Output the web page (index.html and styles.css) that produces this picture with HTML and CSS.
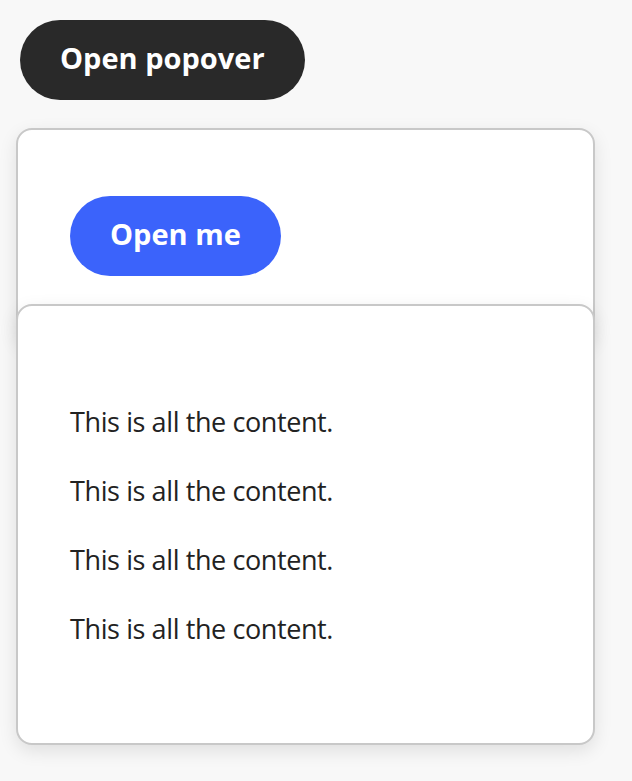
FILE: index.html
```html
<!DOCTYPE html>
<html lang="en">
<head>
<meta charset="utf-8">
<title>Popover</title>
<link rel="stylesheet" href="styles.css">
</head>
<body>
  <main class="page">
    <button class="btn btn-dark" type="button">Open popover</button>

    <div class="popover popover-outer">
      <button class="btn btn-accent" type="button">Open me</button>
    </div>

    <div class="popover popover-inner">
      <p class="content">This is all the content.</p>
      <p class="content">This is all the content.</p>
      <p class="content">This is all the content.</p>
      <p class="content">This is all the content.</p>
    </div>
  </main>
</body>
</html>
```

FILE: styles.css
```css
html, body {
  margin: 0;
  padding: 0;
  background: #f8f8f8;
}

body {
  font-family: "Open Sans", "Noto Sans", sans-serif;
  color: #222222;
}

.page {
  position: relative;
  padding: 20px;
  min-height: 781px;
  box-sizing: border-box;
}

.btn {
  display: inline-flex;
  align-items: center;
  justify-content: center;
  box-sizing: border-box;
  height: 80px;
  padding: 0 40px 5px;
  border: none;
  border-radius: 40px;
  font-family: "Open Sans", "Noto Sans", sans-serif;
  font-weight: 700;
  font-size: 29px;
  color: #ffffff;
  cursor: pointer;
}

.btn-dark {
  background: #292929;
}

.btn-accent {
  background: #3b63fb;
}

.popover {
  position: absolute;
  left: 16px;
  width: 579px;
  box-sizing: border-box;
  background: #ffffff;
  border: 2px solid #c8c8c8;
  border-radius: 16px;
  box-shadow: 0 6px 18px rgba(0, 0, 0, 0.10);
}

.popover-outer {
  top: 128px;
  height: 216px;
  padding: 66px 52px;
}

.popover-inner {
  top: 304px;
  height: 441px;
  padding: 98px 52px;
}

.content {
  margin: 0 0 34px;
  font-size: 27px;
  line-height: 35px;
  letter-spacing: -0.4px;
  color: #222222;
}
```
